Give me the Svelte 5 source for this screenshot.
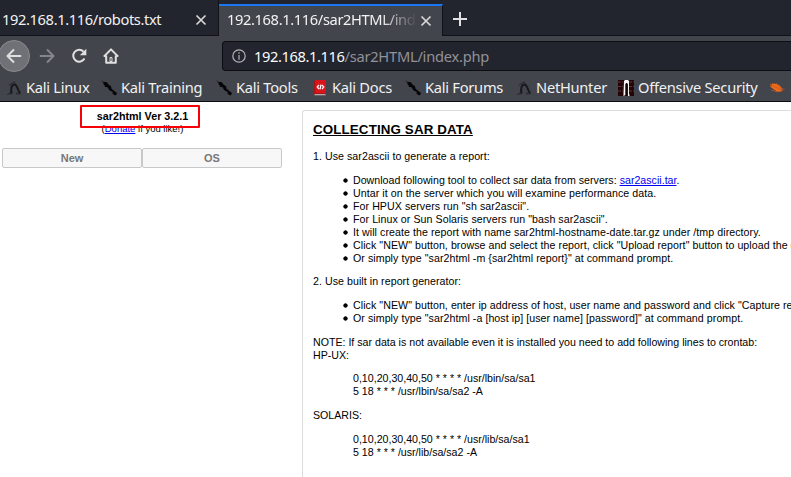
<script>
  const bookmarks = [
    { label: 'Kali Linux', icon: 'dragon', x: 6, w: 83 },
    { label: 'Kali Training', icon: 'tool', x: 101, w: 104 },
    { label: 'Kali Tools', icon: 'tool', x: 216, w: 85 },
    { label: 'Kali Docs', icon: 'book', x: 312, w: 81 },
    { label: 'Kali Forums', icon: 'tool', x: 405, w: 100 },
    { label: 'NetHunter', icon: 'dragon', x: 516, w: 90 },
    { label: 'Offensive Security', icon: 'offsec', x: 618, w: 141 },
    { label: '', icon: 'exploit', x: 770, w: 21 }
  ].map((b, i, all) => ({ ...b, gap: i ? b.x - all[i - 1].x - all[i - 1].w : 6 }));
</script>

<div class="window">
  <div class="tabs">
    <div class="tab first">
      <span class="title">192.168.1.116/robots.txt</span>
      <svg class="close" viewBox="0 0 12 12" width="12" height="12"><path d="M1.5 1.5l9 9M10.5 1.5l-9 9" /></svg>
    </div>
    <div class="tab active">
      <span class="title fade">192.168.1.116/sar2HTML/index.php</span>
      <svg class="close" viewBox="0 0 12 12" width="12" height="12"><path d="M1.5 1.5l9 9M10.5 1.5l-9 9" /></svg>
    </div>
    <svg class="plus" viewBox="0 0 14 14" width="14" height="14"><path d="M7 0v14M0 7h14" /></svg>
  </div>

  <div class="nav">
    <div class="back">
      <svg viewBox="0 0 16 16" width="16" height="16"><path d="M15.2 8H1.5M8 1.5L1.5 8L8 14.5" /></svg>
    </div>
    <svg class="forward" viewBox="0 0 16 16" width="16" height="16"><path d="M.8 8h13.7M8 1.5L14.5 8L8 14.5" /></svg>
    <svg class="reload" viewBox="0 0 16 16" width="16" height="16"><path class="arc" d="M12.6 3.6A6 6 0 1 0 13.5 10.6" /><path class="head" d="M15.3 .8V7.2H8.8Z" /></svg>
    <svg class="home" viewBox="0 0 16 16" width="16" height="16"><path d="M.8 8.6L8 1.4l7.2 7.2M3.2 7.5v7.3h9.6V7.5" /><path class="door" d="M7 9.5h2v4H7z" /></svg>
    <div class="url">
      <svg viewBox="0 0 14 14" width="14" height="14"><circle cx="7" cy="7" r="6.2" /><path d="M7 6v4.7M7 3.2v1.5" /></svg>
      <span class="address"><b>192.168.1.116</b>/sar2HTML/index.php</span>
    </div>
  </div>

  <div class="bookmarks">
    {#each bookmarks as b}
      <div class="bookmark" style="width: {b.w}px; margin-left: {b.gap}px">
        {#if b.icon === 'dragon'}
          <svg viewBox="0 0 16 16" width="16" height="16"><path fill="#2c2e33" d="M0 15l5-3.4l1 2.6zM10.5 12l4.5 2.4H9.8z" /><path fill="none" stroke="#17191d" stroke-width="2" d="M5.8 13.4C4.4 10 5.2 4.8 8.2 4.4C12 4.4 10.6 9.6 14.4 13.4" /><path fill="none" stroke="#2b2d32" stroke-width="1.1" d="M3 5.2L8.2 2l1.2 2" /></svg>
        {:else if b.icon === 'tool'}
          <svg viewBox="0 0 16 16" width="16" height="16"><path fill="#050607" d="M0 0l2.2 1.8L6 2.2l1.2 2l3 2.2l.2 2.2l3.2 2.6l2.2 1.6l-.2 1.7l-1.6 1l-2.6-2l.4-1.4l-2.3-1.2L8 9.7L6.5 7.2l-3-.5L4 5.8L2 3.8L3 3.5z" /></svg>
        {:else if b.icon === 'book'}
          <svg viewBox="0 0 16 16" width="16" height="16"><path fill="#a71217" d="M2 1l2-1v13l-2 2z" /><path fill="#d9141a" d="M3.3 0h10.7v13.2H3.3z" /><path fill="#e7e4e0" d="M2.5 14.2h11v1h-11z" /><path fill="#b11218" d="M2 13.2h12v1H2z" /><path fill="none" stroke="#fff" stroke-width="1.2" d="M7 5L5.2 7L7 9M10 5l1.8 2L10 9M9 4.6L8 9.4" /></svg>
        {:else if b.icon === 'offsec'}
          <svg viewBox="0 0 16 16" width="16" height="16"><path fill="#210507" d="M0 0h16v16H0z" /><path stroke="#794747" stroke-width=".7" stroke-dasharray="3 1" d="M0 2h5M11 2h5M0 6.5h5M11 6.5h5M0 11h5M11 11h5" /><path fill="#f8f5f3" d="M6 1l1-1h3l1 1v12l.6 3H9.8V5L9.3 3H7.9L7.5 5v10L5.4 16z" /><path fill="#120304" d="M7.6 4h2v12h-2z" /></svg>
        {:else}
          <svg viewBox="0 0 16 16" width="16" height="16"><path fill="#f26a17" d="M2 3.5l3.2.3l4 1.2l3 3.4l-.8 3l-3.9.4l-3.8-2.5L0 6.6l1.5-.6z" /><path stroke="#c25a24" stroke-width=".8" d="M0 4l13 7M6 3l6 7M1.5 10l6 2M10.5 9l4 .2M2 6L0 5.5" /></svg>
        {/if}
        <span>{b.label}</span>
      </div>
    {/each}
  </div>

  <div class="page">
    <div class="side">
      <div class="brand">
        <strong>sar2html Ver 3.2.1</strong>
        <div class="donate">(<a href="#donate">Donate</a> if you like!)</div>
        <div class="highlight"></div>
      </div>
      <div class="buttons"><button>New</button><button>OS</button></div>
    </div>
    <div class="content">
      <h1>COLLECTING SAR DATA</h1>
      <p class="step">1. Use sar2ascii to generate a report:</p>
      <ul>
        <li class="download">Download following tool to collect sar data from servers: <a href="#tar">sar2ascii.tar</a>.</li>
        <li>Untar it on the server which you will examine performance data.</li>
        <li>For HPUX servers run "sh sar2ascii".</li>
        <li>For Linux or Sun Solaris servers run "bash sar2ascii".</li>
        <li>It will create the report with name sar2html-hostname-date.tar.gz under /tmp directory.</li>
        <li>Click "NEW" button, browse and select the report, click "Upload report" button to upload the data.</li>
        <li>Or simply type "sar2html -m &#123;sar2html report&#125;" at command prompt.</li>
      </ul>
      <p class="step up">2. Use built in report generator:</p>
      <ul>
        <li>Click "NEW" button, enter ip address of host, user name and password and click "Capture report" button.</li>
        <li>Or simply type "sar2html -a [host ip] [user name] [password]" at command prompt.</li>
      </ul>
      <p>NOTE: If sar data is not available even it is installed you need to add following lines to crontab:<br />HP-UX:</p>
      <p class="cron up">0,10,20,30,40,50 * * * * /usr/lbin/sa/sa1<br />5 18 * * * /usr/lbin/sa/sa2 -A</p>
      <p>SOLARIS:</p>
      <p class="cron">0,10,20,30,40,50 * * * * /usr/lib/sa/sa1<br />5 18 * * * /usr/lib/sa/sa2 -A</p>
    </div>
  </div>
</div>

<style>
  .window { width: 791px; height: 477px; overflow: hidden; background: #fff; display: flex; flex-direction: column; }
  .window * { box-sizing: border-box; }
  svg { flex: none; display: block; }
  .tabs, .nav, .bookmarks { font-family: "Noto Sans", sans-serif; white-space: nowrap; flex: none; }
  .tabs { display: flex; height: 36px; background: #23252e; border-bottom: 1px solid #111217; }
  .tab { display: flex; align-items: center; height: 36px; font-size: 14.67px; letter-spacing: -.37px; color: #f2f2f2; }
  .first { width: 219px; height: 35px; padding: 5px 0 0 2px; border-right: 1px solid #111217; }
  .title { width: 193px; line-height: 20px; }
  .first .title { margin-top: -3px; }
  .active { width: 224px; margin-top: 4px; height: 32px; border-top: 2px solid #1b76f3; background: #43454d; padding: 0 0 1px 8px; border-right: 1px solid #111217; }
  .fade { overflow: hidden; width: 188px; margin-top: -3px; mask-image: linear-gradient(90deg, #000 154px, transparent 190px); }
  .active .close { margin-left: 5px; }
  .close path { stroke: #d8d8da; stroke-width: 1.7; fill: none; }
  .plus { margin: 12px 0 0 10px; }
  .plus path { stroke: #e1e1e3; stroke-width: 2; }
  .nav { display: flex; align-items: center; height: 40px; background: #43454d; }
  .nav path { fill: none; stroke: #e0e0de; stroke-width: 2; stroke-linejoin: round; }
  .back { width: 32px; height: 32px; margin-left: -2px; border: 1px solid #8a8b8f; border-radius: 50%; background: #707176; display: grid; place-items: center; }
  .forward { margin-left: 9px; }
  .nav .forward path { stroke: #85868b; }
  .reload { margin-left: 16px; }
  .nav .head { fill: #e0e0de; stroke: none; }
  .home { margin-left: 16px; }
  .nav .door { stroke-width: 1; }
  .url { margin-left: 103px; width: 569px; flex: none; height: 30px; background: #23252e; border: 1px solid #0c0d12; border-right: 0; border-radius: 4px 0 0 4px; display: flex; align-items: center; padding-left: 9px; color: #929298; font-size: 14.67px; letter-spacing: -.24px; }
  .url svg path, .url circle { fill: none; stroke: #b5b5b9; stroke-width: 1.2; }
  .address { margin-left: 8px; line-height: 22px; }
  .address b { font-weight: 400; color: #fafafa; letter-spacing: -.4px; }
  .bookmarks { display: flex; align-items: center; height: 26px; background: #43454d; border-bottom: 1px solid #0b0c11; color: #f1f1f1; font-size: 14.67px; letter-spacing: -.26px; padding-bottom: 2px; }
  .bookmark { display: flex; align-items: center; gap: 4px; flex: none; line-height: 20px; }
  .bookmark span { margin-top: -1px; }
  .page { display: flex; flex: 1; min-height: 0; font: 10.63px/13px "Liberation Sans", sans-serif; color: #000; }
  .side { width: 302px; flex: none; padding-top: 3px; }
  .brand { position: relative; width: 120px; margin-left: 80px; height: 43px; padding: 5px 0 0 5px; text-align: center; }
  .brand strong { display: block; font-size: 10.75px; line-height: 13px; white-space: nowrap; }
  .donate { font-size: 9.5px; line-height: 12px; white-space: nowrap; }
  .highlight { position: absolute; left: 0; top: 0; width: 120px; height: 23px; border: 2px solid #f80008; border-radius: 1px; }
  a { color: #0000ee; }
  .buttons { display: flex; width: 280px; margin-left: 2px; }
  button { width: 140px; height: 20px; border: 1px solid #c8c8c8; border-radius: 2px; background: #f7f7f7; color: #777; font: bold 11px "Liberation Sans", sans-serif; padding: 0; }
  .content { width: 489px; height: 400px; margin-top: 8px; border: 1px solid #ddd; border-right: 0; border-bottom: 0; border-radius: 3px 0 0 0; padding-left: 10px; white-space: nowrap; overflow: hidden; }
  h1 { font-size: 13.33px; letter-spacing: .14px; line-height: 16px; margin: 11px 0 12px; text-decoration: underline; }
  p, ul { margin: 0 0 11px; }
  ul { padding-left: 40px; list-style: none; }
  li { display: block; height: 13px; letter-spacing: .06px; }
  .step { letter-spacing: .05px; }
  .download { letter-spacing: .015px; }
  li::before { content: ""; display: inline-block; width: 5px; height: 5px; margin: 0 5px 1px -10px; border-radius: 50%; background: radial-gradient(circle, #000 1.8px, transparent 2.6px); letter-spacing: 0; }
  ul:has(+ .up), p:has(+ .up) { margin-bottom: 10px; }
  .cron { padding-left: 40px; }
</style>
